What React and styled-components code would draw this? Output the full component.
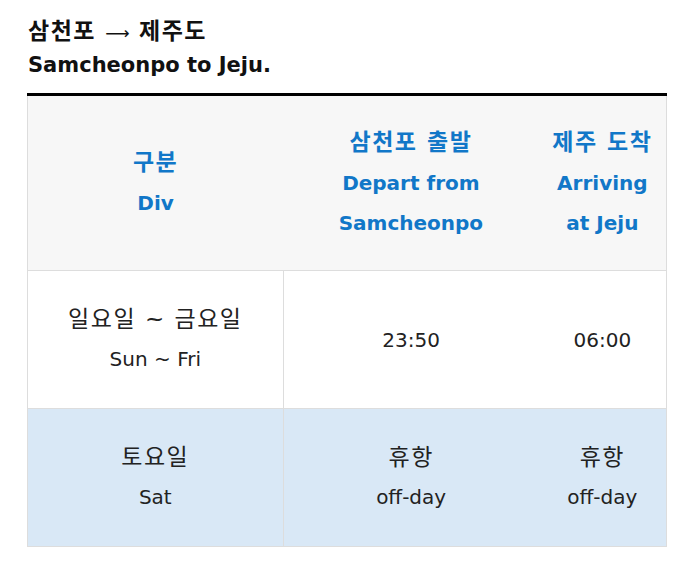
import React from "react";
import styled, { createGlobalStyle } from "styled-components";

const GlobalStyle = createGlobalStyle`
  body {
    margin: 0;
    background: #fff;
    font-family: "DejaVu Sans", "Noto Sans CJK KR", sans-serif;
    color: #222;
  }
`;

const Page = styled.div`
  padding: 16px 18px 0 27px;
  width: 640px;
`;

const Title = styled.h2`
  margin: 0 0 11px 1px;
  font-size: 21px;
  line-height: 33px;
  font-weight: 700;
  color: #111;
`;

const Ko = styled.span`
  font-size: ${({ $size }) => $size || "23px"};
  letter-spacing: ${({ $spacing }) => $spacing || "1.5px"};
  line-height: 1;
`;

const Arrow = styled.span`
  font-weight: 400;
  font-size: 17px;
  line-height: 1;
  margin: 0 2px;
`;

const Table = styled.table`
  width: 640px;
  border-collapse: collapse;
  border-top: 3px solid #000;
  table-layout: fixed;
`;

const HeadCell = styled.th`
  background: #f7f7f7;
  color: #1177c8;
  font-size: 20px;
  font-weight: 700;
  line-height: 40px;
  padding: 27px 0;
  border-left: ${({ $first }) => ($first ? "1px solid #ddd" : "none")};
  border-right: ${({ $last }) => ($last ? "1px solid #ddd" : "none")};
  border-bottom: 1px solid #ddd;
`;

const Row = styled.tr`
  background: ${({ $alt }) => ($alt ? "#d9e8f6" : "#fff")};
`;

const Cell = styled.td`
  text-align: center;
  font-size: 20px;
  line-height: 39px;
  padding: 30px 0 29px;
  height: 78px;
  border-bottom: 1px solid #ddd;
  border-left: ${({ $first, $sep }) =>
    $first || $sep ? "1px solid #ddd" : "none"};
  border-right: ${({ $last }) => ($last ? "1px solid #ddd" : "none")};
`;

const hangul = /[\uac00-\ud7a3]/;

// korean lines get the wider hangul size
const Lines = ({ items }) =>
  items.map((t, i) => (
    <React.Fragment key={i}>
      {i > 0 && <br />}
      {hangul.test(t) ? <Ko>{t}</Ko> : t}
    </React.Fragment>
  ));

const rows = [
  { ko: "일요일 ~ 금요일", en: "Sun ~ Fri", dep: ["23:50"], arr: ["06:00"] },
  {
    ko: "토요일",
    en: "Sat",
    dep: ["휴항", "off-day"],
    arr: ["휴항", "off-day"],
    alt: true,
  },
];

const App = () => {
  return (
    <>
      <GlobalStyle />
      <Page>
        <Title>
          <Ko $size="23px">삼천포</Ko> <Arrow>⟶</Arrow>{" "}
          <Ko $size="23px">제주도</Ko>
          <br />
          Samcheonpo to Jeju.
        </Title>
        <Table>
          <colgroup>
            <col style={{ width: "40%" }} />
            <col style={{ width: "40%" }} />
            <col style={{ width: "20%" }} />
          </colgroup>
          <thead>
            <tr>
              <HeadCell $first>
                <Lines items={["구분", "Div"]} />
              </HeadCell>
              <HeadCell>
                <Lines items={["삼천포 출발", "Depart from", "Samcheonpo"]} />
              </HeadCell>
              <HeadCell $last>
                <Lines items={["제주 도착", "Arriving", "at Jeju"]} />
              </HeadCell>
            </tr>
          </thead>
          <tbody>
            {rows.map((r, i) => (
              <Row key={i} $alt={r.alt}>
                <Cell $first>
                  <Lines items={[r.ko, r.en]} />
                </Cell>
                <Cell $sep>
                  <Lines items={r.dep} />
                </Cell>
                <Cell $last>
                  <Lines items={r.arr} />
                </Cell>
              </Row>
            ))}
          </tbody>
        </Table>
      </Page>
    </>
  );
};

export default App;
